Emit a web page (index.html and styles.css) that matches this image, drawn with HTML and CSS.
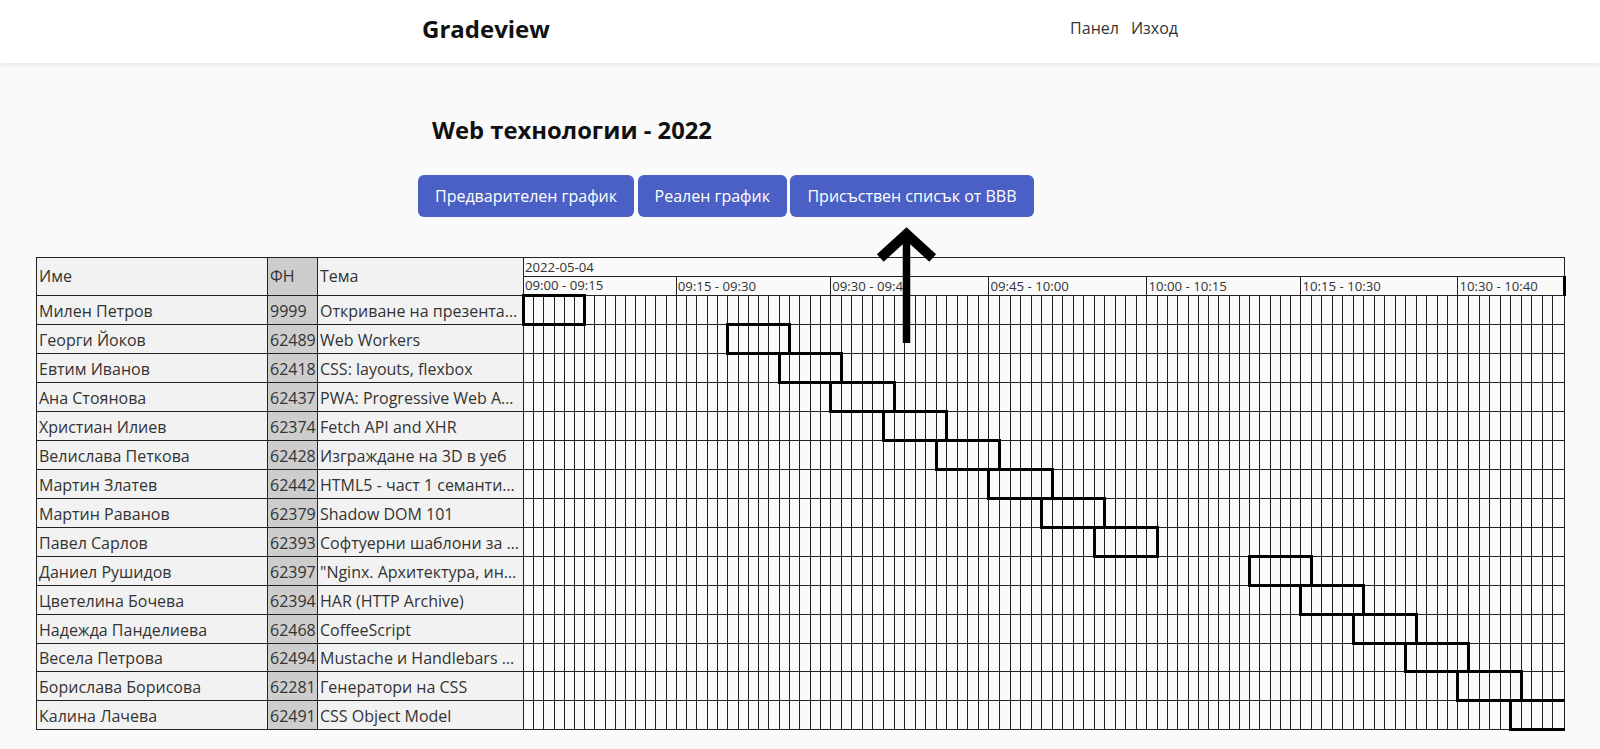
FILE: index.html
```html
<!DOCTYPE html>
<html lang="bg">
<head>
  <meta charset="UTF-8" />
  <meta name="viewport" content="width=device-width, initial-scale=1.0" />
  <title>Gradeview</title>
  <link rel="stylesheet" href="styles.css">
</head>
<body>
  <header class="topbar">
    <div class="topbar-inner">
      <a class="brand" href="#">Gradeview</a>
      <nav class="nav">
        <a href="#">Панел</a>
        <a href="#">Изход</a>
      </nav>
    </div>
  </header>

  <main>
    <div class="course">
      <h1>Web технологии - 2022</h1>
      <div class="buttons">
        <a class="btn" href="#">Предварителен график</a>
        <a class="btn" href="#">Реален график</a>
        <a class="btn" href="#">Присъствен списък от BBB</a>
      </div>
    </div>

    <!-- Schedule table, rows are filled in by script.js -->
    <div class="schedule">
      <table id="schedule-table"></table>
    </div>

    <!-- Annotation drawn over the screenshot -->
    <svg class="arrow" width="74" height="122" viewBox="0 0 74 122" aria-hidden="true">
      <path d="M36.5 121V12" fill="none" stroke="#000" stroke-width="7.5" />
      <path d="M10.3 36L36.5 12L62.7 36" fill="none" stroke="#000" stroke-width="10" />
    </svg>
  </main>

  <script src="script.js"></script>
</body>
</html>
```

FILE: styles.css
```css
/* Basic Reset & Styling */
body {
  font-family: "Open Sans", "Noto Sans", sans-serif;
  background: #fafafa;
  color: #333;
  margin: 0;
  padding: 0;
}

a {
  color: inherit;
  text-decoration: none;
}

/* Top bar */
.topbar {
  background: #fff;
  height: 63px;
  box-shadow: 0 1px 6px rgba(0, 0, 0, 0.1);
}

.topbar-inner {
  width: 756px;
  margin: 0 auto;
  padding-top: 12px;
  display: flex;
  justify-content: space-between;
}

.brand {
  font-size: 24px;
  font-weight: 700;
  line-height: 33px;
  color: #111;
}

.nav {
  display: flex;
  gap: 12px;
  font-size: 16px;
  line-height: 32px;
}

/* Course heading and buttons */
.course {
  width: 764px;
  margin: 0 auto;
  padding-top: 51px;
  box-sizing: border-box;
}

.course h1 {
  margin: 0 0 28px 14px;
  font-size: 23.8px;
  line-height: 33px;
  font-weight: 700;
  color: #111;
}

.buttons {
  display: flex;
  gap: 3.5px;
}

.btn {
  background: #4a60c4;
  color: #fff;
  font-size: 16px;
  line-height: 42px;
  padding: 0 17px;
  border-radius: 6px;
  white-space: nowrap;
}

/* Schedule table */
.schedule {
  margin: 40px 0 0 36px;
}

#schedule-table {
  border-collapse: collapse;
  table-layout: fixed;
  width: 1528px;
  font-size: 16px;
}

#schedule-table td {
  border: 1px solid #222;
  padding: 0;
  overflow: hidden;
  white-space: nowrap;
  font-weight: 400;
  text-align: left;
}

#schedule-table tr {
  height: 29px;
}

#schedule-table .col-name,
#schedule-table .col-fn,
#schedule-table .col-topic {
  padding: 2px 2px 0;
  background: #f2f2f2;
  line-height: 25px;
}

#schedule-table .col-fn {
  background: #cdcdcd;
}

#schedule-table .head {
  padding-top: 0;
}

#schedule-table .date-row,
#schedule-table .time-row {
  height: 19px;
}

/* One row of the capture is a pixel shorter than the rest */
#schedule-table .row-short {
  height: 28px;
}

#schedule-table .date,
#schedule-table .time {
  font-size: 13.2px;
  line-height: 17px;
  padding: 0 1px;
}

/* Highlighted presentation slot */
#schedule-table .slot-on {
  border-top: 3px solid #000;
  border-bottom: 3px solid #000;
}

#schedule-table .slot-start {
  border-left: 3px solid #000;
}

#schedule-table .slot-end {
  border-right: 3px solid #000;
}

#schedule-table .time-last {
  border-right: 3px solid #000;
}

/* Arrow over the table */
.arrow {
  position: absolute;
  left: 870px;
  top: 222px;
}
```

FILE: script.js
```js
// Presentations: name, faculty number, topic as listed, start minute from 09:00
var people = [
  ["Милен Петров", "9999", "Откриване на презента…", 0],
  ["Георги Йоков", "62489", "Web Workers", 20],
  ["Евтим Иванов", "62418", "CSS: layouts, flexbox", 25],
  ["Ана Стоянова", "62437", "PWA: Progressive Web A…", 30],
  ["Христиан Илиев", "62374", "Fetch API and XHR", 35],
  ["Велислава Петкова", "62428", "Изграждане на 3D в уеб", 40],
  ["Мартин Златев", "62442", "HTML5 - част 1 семанти…", 45],
  ["Мартин Раванов", "62379", "Shadow DOM 101", 50],
  ["Павел Сарлов", "62393", "Софтуерни шаблони за …", 55],
  ["Даниел Рушидов", "62397", "\"Nginx. Архитектура, ин…", 70],
  ["Цветелина Бочева", "62394", "HAR (HTTP Archive)", 75],
  ["Надежда Панделиева", "62468", "CoffeeScript", 80],
  ["Весела Петрова", "62494", "Mustache и Handlebars …", 85],
  ["Борислава Борисова", "62281", "Генератори на CSS", 90],
  ["Калина Лачева", "62491", "CSS Object Model", 95]
];

// Time headers: label, number of one-minute columns, width of one column
var periods = [
  ["09:00 - 09:15", 15, 10.2],
  ["09:15 - 09:30", 15, 10.3],
  ["09:30 - 09:45", 15, 10.55],
  ["09:45 - 10:00", 15, 10.54],
  ["10:00 - 10:15", 15, 10.27],
  ["10:15 - 10:30", 15, 10.48],
  ["10:30 - 10:40", 10, 10.55]
];

var TOTAL_MINUTES = 100;
var SLOT_LENGTH = 6;
var SHORT_ROW = 12;

function buildColumns(table) {
  var html = '<colgroup><col style="width:231px"><col style="width:50px"><col style="width:206px">';
  for (var i = 0; i < periods.length; i++) {
    for (var j = 0; j < periods[i][1]; j++) {
      html += '<col style="width:' + periods[i][2] + 'px">';
    }
  }
  table.innerHTML = html + "</colgroup>";
}

function buildHeader(tbody) {
  var html = '<tr class="date-row">' +
    '<td class="col-name head" rowspan="2">Име</td>' +
    '<td class="col-fn head" rowspan="2">ФН</td>' +
    '<td class="col-topic head" rowspan="2">Тема</td>' +
    '<td class="date" colspan="' + TOTAL_MINUTES + '">2022-05-04</td></tr><tr class="time-row">';
  for (var i = 0; i < periods.length; i++) {
    var last = i === periods.length - 1 ? " time-last" : "";
    html += '<td class="time' + last + '" colspan="' + periods[i][1] + '">' + periods[i][0] + "</td>";
  }
  tbody.innerHTML = html + "</tr>";
}

function buildRow(person, index) {
  var tr = document.createElement("tr");
  if (index === SHORT_ROW) tr.className = "row-short";
  var html = '<td class="col-name">' + person[0] + "</td>" +
    '<td class="col-fn">' + person[1] + "</td>" +
    '<td class="col-topic">' + person[2] + "</td>";
  var start = person[3];
  var end = start + SLOT_LENGTH - 1;
  for (var m = 0; m < TOTAL_MINUTES; m++) {
    var cls = "";
    if (m >= start && m <= end) {
      cls = "slot-on";
      if (m === start) cls += " slot-start";
      if (m === end) cls += " slot-end";
    }
    html += '<td class="' + cls + '"></td>';
  }
  tr.innerHTML = html;
  return tr;
}

function pageLoaded() {
  var table = document.getElementById("schedule-table");
  buildColumns(table);
  var tbody = document.createElement("tbody");
  table.appendChild(tbody);
  buildHeader(tbody);
  for (var i = 0; i < people.length; i++) {
    tbody.appendChild(buildRow(people[i], i));
  }
}

pageLoaded();
```
